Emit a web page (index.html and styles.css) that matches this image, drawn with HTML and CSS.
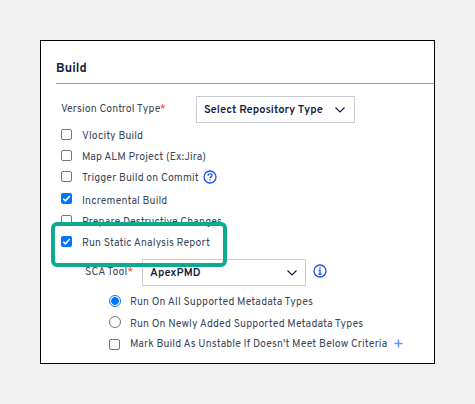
FILE: index.html
```html
<!DOCTYPE html>
<html lang="en">
<head>
<meta charset="utf-8">
<title>Build</title>
<link rel="stylesheet" href="styles.css">
</head>
<body>
<main class="panel">
  <h1 class="title"><span>Build</span></h1>
  <div class="field">
    <span class="label version">Version Control Type<b>*</b></span>
    <div class="select repo"><span class="repo-text">Select Repository Type</span><svg class="chevron" viewBox="0 0 12 8"><path d="M1.5 1.5 6 6l4.5-4.5"/></svg></div>
  </div>
  <div class="options">
    <label class="row vlocity"><i class="box"></i><span>Vlocity Build</span></label>
    <label class="row alm"><i class="box"></i><span>Map ALM Project (Ex:Jira)</span></label>
    <label class="row trigger"><i class="box"></i><span>Trigger Build on Commit</span><svg class="help" viewBox="0 0 14 14"><circle cx="7" cy="7" r="6"/><path d="M5 5.7C5 3.2 9 3.2 9 5.5 9 6.9 7 6.8 7 8.3M7 9.3v1.2"/></svg></label>
    <label class="row incremental"><i class="box checked"><svg viewBox="0 0 11 11"><path d="M2.2 5.7 4.4 7.9 8.8 3"/></svg></i><span>Incremental Build</span></label>
    <label class="row prepare"><i class="box"></i><span>Prepare Destructive Changes</span></label>
    <label class="row static"><i class="box checked"><svg viewBox="0 0 11 11"><path d="M2.2 5.7 4.4 7.9 8.8 3"/></svg></i><span>Run Static Analysis Report</span></label>
  </div>
  <div class="field tool">
    <span class="label sca">SCA Tool<b>*</b></span>
    <div class="select pmd"><span class="pmd-text">ApexPMD</span><svg class="chevron" viewBox="0 0 12 8"><path d="M1.5 1.5 6 6l4.5-4.5"/></svg></div>
    <svg class="info" viewBox="0 0 14 14"><circle cx="7" cy="7" r="6"/><path d="M7 3.3v1.4M5.5 6.2H7v4M5.3 10.2h3.4"/></svg>
  </div>
  <div class="suboptions">
    <label class="row all"><i class="radio on"></i><span>Run On All Supported Metadata Types</span></label>
    <label class="row newly"><i class="radio"></i><span>Run On Newly Added Supported Metadata Types</span></label>
    <label class="row mark"><i class="box"></i><span>Mark Build As Unstable If Doesn't Meet Below Criteria</span><svg class="plus" viewBox="0 0 9 9"><path d="M4.5.5v8M.5 4.5h8"/></svg></label>
  </div>
  <div class="highlight"></div>
</main>
</body>
</html>
```
FILE: styles.css
```css
* { box-sizing: border-box; }
body {
  margin: 0;
  padding: 40px;
  background: #f1f1f1;
  font: 10.5px/14px "Overpass", Roboto, "Liberation Sans", sans-serif;
  letter-spacing: 0.13px;
  color: #3b4658;
  white-space: nowrap;
}
svg { display: block; flex: none; fill: none; }
.panel {
  position: relative;
  width: 395px;
  height: 324px;
  border: 1px solid #000;
  background: #fff;
}
.title {
  height: 43px;
  margin: 0 0 0 15px;
  padding-top: 20px;
  border-bottom: 1px solid #969fad;
  font-size: 12.5px;
  line-height: 16px;
  font-weight: 700;
  letter-spacing: 0.1px;
  color: #152238;
}
.field { display: flex; align-items: center; height: 27px; margin: 12px 0 0 20px; }
.label b { color: #f33; font-weight: 400; }
.version { width: 135px; }
.select {
  display: flex;
  align-items: center;
  justify-content: space-between;
  height: 27px;
  padding: 0 8px 0 7px;
  border: 1px solid #c8cbd4;
  background: #fff;
  font-size: 11.2px;
  font-weight: 600;
  letter-spacing: 0;
  color: #14213a;
}
.repo { width: 159px; }
.pmd { width: 164px; padding-right: 7px; }
.chevron { width: 12px; height: 8px; stroke: #14213a; stroke-width: 1.2; }
.options { margin: 1px 0 0 20px; }
.row { display: flex; align-items: center; height: 21px; }
.row > span { margin-left: 10px; padding-top: 5px; }
.box {
  width: 11px;
  height: 11px;
  flex: none;
  border: 1px solid #777;
  border-radius: 2px;
  background: #fff;
}
.checked { border: 0; background: #0075ff; }
.checked svg { width: 11px; height: 11px; stroke: #fff; stroke-width: 1.6; }
.incremental { height: 23px; }
.incremental > span { padding-top: 7px; }
.prepare { height: 20px; }
.static { height: 22px; }
.help, .info { width: 14px; height: 14px; stroke: #1c50f5; stroke-width: 1.3; }
.help { margin-left: 4px; }
.info { margin-left: 7px; margin-top: -4px; }
.tool { margin: 7px 0 0 44px; }
.sca { width: 57px; }
.suboptions { margin: 4px 0 0 68px; }
.radio {
  width: 12px;
  height: 12px;
  flex: none;
  border: 1px solid #777;
  border-radius: 50%;
}
.radio.on {
  border-color: #0075ff;
  background: radial-gradient(circle, #0075ff 3.5px, #fff 4.2px);
}
.suboptions .row > span { margin-left: 9px; }
.suboptions .newly > span { padding-top: 7px; }
.suboptions .mark { margin-top: 2px; }
.suboptions .mark > span { margin-left: 10px; padding-top: 1px; }
.plus { width: 9px; height: 9px; margin: -2px 0 0 7px; stroke: #6695fa; stroke-width: 1.4; }
.highlight {
  position: absolute;
  left: 10px;
  top: 181px;
  width: 176px;
  height: 45px;
  border: 4px solid #0aac8d;
  border-radius: 6px;
}
```
